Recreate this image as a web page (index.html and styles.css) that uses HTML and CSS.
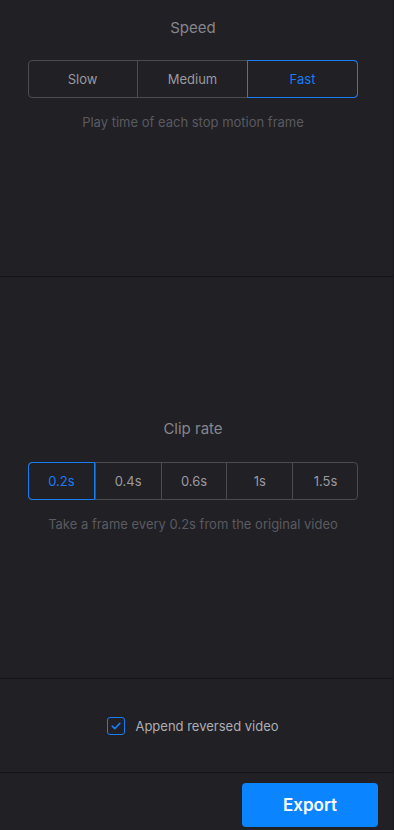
FILE: index.html
```html
<!DOCTYPE html>
<html>
<head>
  <link rel="stylesheet" href="styles.css">
</head>
<body>
  <!-- Speed Section -->
  <div class="panel panel-speed">
    <div class="group">
      <div class="group-title">Speed</div>
      <div class="segmented three">
        <div class="segment">Slow</div>
        <div class="segment">Medium</div>
        <div class="segment active">Fast</div>
      </div>
      <div class="group-hint">Play time of each stop motion frame</div>
    </div>
  </div>
  <!-- Clip Rate Section -->
  <div class="panel panel-clip">
    <div class="group">
      <div class="group-title">Clip rate</div>
      <div class="segmented five">
        <div class="segment active">0.2s</div>
        <div class="segment">0.4s</div>
        <div class="segment">0.6s</div>
        <div class="segment">1s</div>
        <div class="segment">1.5s</div>
      </div>
      <div class="group-hint">Take a frame every 0.2s from the original video</div>
    </div>
  </div>
  <!-- Options Section -->
  <div class="panel panel-options">
    <label class="check">
      <span class="check-box">
        <svg width="10" height="8" viewBox="0 0 10 8"><path d="M1.2 4.2 L3.8 6.6 L8.8 1.4" fill="none" stroke="#1a7cf5" stroke-width="1.6" stroke-linecap="round" stroke-linejoin="round"/></svg>
      </span>
      Append reversed video
    </label>
  </div>
  <!-- Footer Section -->
  <div class="footer">
    <button class="button-export">Export</button>
  </div>
</body>
</html>
```
FILE: styles.css
```css
/* Main Element Styles */
html, body {
  margin: 0;
  padding: 0;
  height: 100%;
}
body {
  font-family: Inter, "Noto Sans", sans-serif;
  background-color: #202025;
  color: #9a9aa0;
  display: flex;
  flex-direction: column;
  border-right: 1px solid #1a1a1e;
  box-sizing: border-box;
}

/* Panel Styles */
.panel {
  border-bottom: 1px solid #141418;
  display: flex;
  justify-content: center;
  padding-right: 7px;
  box-sizing: border-box;
}
.panel-speed {
  height: 277px;
  align-items: flex-start;
  padding-top: 18px;
}
.panel-speed .group-title {
  margin-bottom: 22px;
}
.panel-clip {
  height: 402px;
  align-items: center;
  padding-bottom: 4px;
}
.panel-options {
  height: 94px;
  align-items: center;
  padding-top: 1px;
}

/* Group Styles */
.group {
  display: flex;
  flex-direction: column;
  align-items: center;
  width: 330px;
}
.group-title {
  font-size: 15px;
  line-height: 20px;
  color: #86868c;
  margin-bottom: 23px;
}
.group-hint {
  font-size: 13px;
  line-height: 16px;
  color: #5a5a60;
  margin-top: 16px;
}

/* Segmented Control Styles */
.segmented {
  display: flex;
  width: 100%;
  height: 38px;
  border: 1px solid #4b4b50;
  border-radius: 4px;
  box-sizing: border-box;
}
.segment {
  flex: 1;
  display: flex;
  align-items: center;
  justify-content: center;
  font-size: 13px;
  color: #9a9aa0;
  border-left: 1px solid #4b4b50;
  margin: -1px 0;
}
.segment:first-child {
  border-left: none;
  margin-left: -1px;
  border-radius: 4px 0 0 4px;
}
.segment:last-child {
  margin-right: -1px;
  border-radius: 0 4px 4px 0;
}
.segment.active {
  color: #1a7cf5;
  border: 1px solid #1a7cf5;
}

/* Checkbox Styles */
.check {
  display: flex;
  align-items: center;
  font-size: 13px;
  color: #aeaeb4;
  gap: 10px;
}
.check-box {
  width: 18px;
  height: 18px;
  border: 1.5px solid #1a7cf5;
  border-radius: 3px;
  box-sizing: border-box;
  display: flex;
  align-items: center;
  justify-content: center;
}

/* Footer Styles */
.footer {
  flex: 1;
  display: flex;
  justify-content: flex-end;
  padding: 10px 15px 0 0;
}
.button-export {
  width: 136px;
  height: 44px;
  background-color: #0a84ff;
  color: white;
  font-family: Inter, "Noto Sans", sans-serif;
  font-size: 17px;
  font-weight: 600;
  border: none;
  border-radius: 4px;
  cursor: pointer;
}
```
